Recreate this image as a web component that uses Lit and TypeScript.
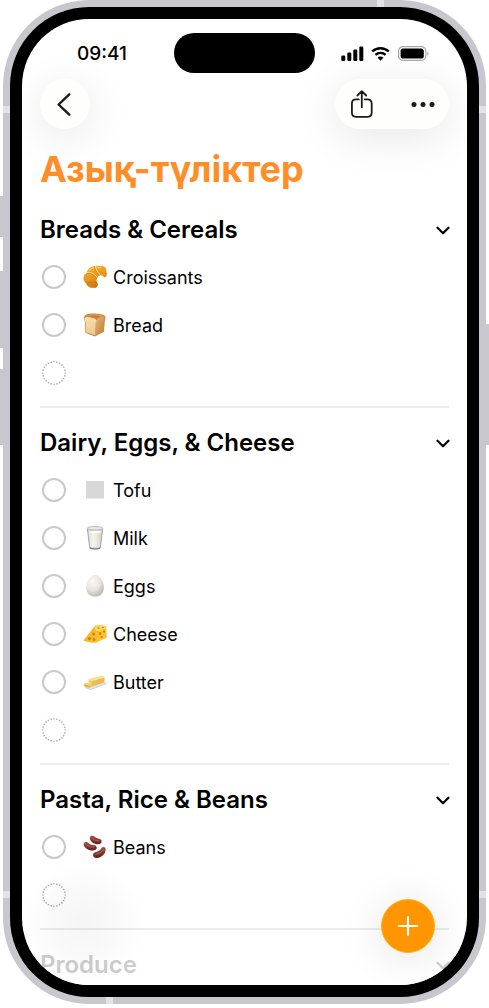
import { LitElement, html, css, svg, nothing, TemplateResult } from "lit";
import { customElement, property } from "lit/decorators.js";

type FoodName = "croissant" | "bread" | "tofu" | "milk" | "egg" | "cheese" | "butter" | "beans";

interface Item {
  name: string;
  food: FoodName;
}

interface Section {
  title: string;
  items: Item[];
}

const SECTIONS: Section[] = [
  {
    title: "Breads & Cereals",
    items: [
      { name: "Croissants", food: "croissant" },
      { name: "Bread", food: "bread" },
    ],
  },
  {
    title: "Dairy, Eggs, & Cheese",
    items: [
      { name: "Tofu", food: "tofu" },
      { name: "Milk", food: "milk" },
      { name: "Eggs", food: "egg" },
      { name: "Cheese", food: "cheese" },
      { name: "Butter", food: "butter" },
    ],
  },
  {
    title: "Pasta, Rice & Beans",
    items: [{ name: "Beans", food: "beans" }],
  },
  { title: "Produce", items: [] },
];

const FOODS: Record<FoodName, TemplateResult> = {
  croissant: svg`
    <defs>
      <linearGradient id="cr" x1="0.2" y1="0" x2="0.6" y2="1">
        <stop offset="0" stop-color="#f5b335"/><stop offset="0.55" stop-color="#e8951c"/><stop offset="1" stop-color="#c8700f"/>
      </linearGradient>
    </defs>
    <path d="M12 1C15 .4 18 1.2 20 1C22.4 1.6 23.6 4 23.4 6.2C24.2 8 24 10.4 23 11.6C22 12.8 20.6 12.4 20.2 11C18.6 9.6 16.4 10 15.2 11.6C13.8 13.4 13 15.4 14 17.6C15.2 18.6 15.4 19.6 14.6 20.6C14.4 22.2 12.6 23.4 10.4 22.8C7.6 23.2 4.4 21.6 3 18.4C.8 16.6 0 14 .8 11.4C1 9.6 2 8.6 3.6 8.2C4.2 4.4 7.4 1.2 12 1Z" fill="url(#cr)"/>
    <path d="M3.8 8.2C7.6 7.6 10.8 9.4 13.6 13.4M11.6 1.2C12 4.8 13.4 7.8 16.4 10.2M3.2 18.2C6.4 16.8 9.8 16.8 14 18" fill="none" stroke="#b8650d" stroke-width=".7" opacity=".6"/>
    <path d="M4 7.4C7.8 6.8 11.4 8.8 14.2 12.4M12.6 1.4C12.8 4.4 14.4 7.4 17 9.6" fill="none" stroke="#ffe19a" stroke-width=".9" stroke-linecap="round"/>
    <path d="M6.4 5.2C7.6 3.8 9 3 10.6 2.8M14.6 2.4C15.8 2.2 17 2.4 17.8 2.6" fill="none" stroke="#ffd268" stroke-width="1.1" stroke-linecap="round"/>`,
  bread: svg`
    <defs>
      <linearGradient id="bf" x1="0" y1="0" x2="0.3" y2="1">
        <stop offset="0" stop-color="#f8e2b6"/><stop offset="1" stop-color="#ecc98c"/>
      </linearGradient>
      <linearGradient id="bs" x1="0" y1="0" x2="1" y2="1">
        <stop offset="0" stop-color="#e6b873"/><stop offset="1" stop-color="#bd7a3a"/>
      </linearGradient>
    </defs>
    <path d="M1.2 3.8C2 1.8 6 .6 10 .6C15 .6 20.6 1.4 22.2 3.4C22.8 5.4 22.2 7 21.6 8L21 18.6L11.8 23.4L2.4 19.8L2 8.4C1 7 .6 5.2 1.2 3.8Z" fill="#c67c3a"/>
    <path d="M13.6 7C14.6 4.6 18 2.6 21 3.2C22.6 4.4 22.2 6.6 21.4 8L20.8 18.4L12 23L12.4 10Z" fill="url(#bs)"/>
    <path d="M1.6 5C2.8 3.6 6.2 4 9.4 4.8C12.4 5.4 14 6.6 13.4 8.8C12.8 9.6 12.6 10 12.6 11L12 22.6L3 19.2L2.6 8.8C1.8 7.8 1 6.2 1.6 5Z" fill="url(#bf)"/>
    <path d="M3.4 3.2C7 1.8 14 1.6 18.8 2.6" fill="none" stroke="#df9a50" stroke-width="1.2" stroke-linecap="round"/>`,
  tofu: svg`<rect x="3" y="3" width="18" height="17.500" fill="#d8d8d8"/>`,
  milk: svg`
    <defs>
      <linearGradient id="mk" x1="0" y1="0" x2="1" y2="0">
        <stop offset="0" stop-color="#e4dfd5"/><stop offset=".4" stop-color="#f8f5ee"/><stop offset="1" stop-color="#d9d3c7"/>
      </linearGradient>
    </defs>
    <path d="M4.200 2L6.600 21.800C7 23.600 17 23.600 17.400 21.800L19.800 2Z" fill="#d2d4d4"/>
    <path d="M5.200 5.800L7.200 20.400C8 21.600 16 21.600 16.800 20.400L18.800 5.800C16 7 8 7 5.200 5.800Z" fill="url(#mk)"/>
    <ellipse cx="12" cy="2.200" rx="7.800" ry="1.700" fill="#e9ebeb" stroke="#a6abad" stroke-width=".7"/>
    <ellipse cx="12" cy="6" rx="6.600" ry="1.200" fill="#fdfbf6"/>
    <path d="M4.400 3L6.700 21.600M19.600 3L17.300 21.600" stroke="#929799" stroke-width=".8"/>
    <path d="M6.700 21.600C8 23.400 16 23.400 17.300 21.600" fill="none" stroke="#75797b" stroke-width="1.100"/>`,
  egg: svg`
    <defs>
      <radialGradient id="eg" cx=".38" cy=".3" r=".75">
        <stop offset="0" stop-color="#fbf9f5"/><stop offset=".55" stop-color="#e9e5de"/><stop offset="1" stop-color="#b9b2a6"/>
      </radialGradient>
    </defs>
    <path d="M12 1C16.800 1 20.800 7.600 20.800 13.400C20.800 19 17 22.600 12 22.600C7 22.600 3.200 19 3.200 13.400C3.200 7.600 7.200 1 12 1Z" fill="url(#eg)"/>`,
  cheese: svg`
    <path d="M.4 18.400L12.200 3.800C14 2.800 20 3.200 23.200 4.600L23.600 15.600L12.800 20.400C9 20.600 4 19.800 .4 18.400Z" fill="#f2a91c"/>
    <path d="M.6 18.200L11.400 7.400L14.400 9.600L13 20.200C9 20.400 4.400 19.600 .6 18.200Z" fill="#f7bb2a"/>
    <path d="M11.400 7.200L12.400 3.800C15 3 20 3.400 23 4.600L22.800 7L14.400 9.400Z" fill="#ffdc55"/>
    <path d="M14.400 9.400L23 6.800L23.400 15.400L13 20.200Z" fill="#fbc62f"/>
    <g fill="#cf7b0c">
      <ellipse cx="6.400" cy="16.600" rx="1.700" ry="1.300"/><ellipse cx="10.600" cy="12" rx="1.300" ry="1.600"/>
      <ellipse cx="11" cy="17.600" rx="1.200" ry="1.400"/><ellipse cx="17" cy="11.400" rx="1.300" ry="1.500"/>
      <ellipse cx="21" cy="9.600" rx="1" ry="1.300"/><ellipse cx="18.600" cy="15" rx="1.200" ry="1"/>
      <ellipse cx="15.400" cy="6" rx="1.300" ry=".7"/><ellipse cx="19.800" cy="5.400" rx="1.100" ry=".6"/>
    </g>`,
  butter: svg`
    <path d="M0 14.600L17.800 9.800L24 13.200L7.400 19.400C4.800 19.800 .6 17.600 0 14.600Z" fill="#e2e5ea"/>
    <path d="M2.400 17.400L7.400 19.600L23.800 13.600" fill="none" stroke="#c4c8d0" stroke-width=".8"/>
    <path d="M.8 14.400C1.800 12.600 3.600 13.400 5.400 13.600L8.600 14.200L7.600 17.600C5 18 1.400 16.800 .8 14.400Z" fill="#e5b647"/>
    <path d="M5.800 9.200L18.800 5.800L21.600 7.400L21.400 12.600L8.600 16.800L5.800 14.400Z" fill="#e9bd55"/>
    <path d="M5.800 9.200L18.800 5.800L21.600 7.400L8.600 11.200Z" fill="#fbe394"/>
    <path d="M5.800 9.200L8.600 11.200V16.800L5.800 14.400Z" fill="#f5d173"/>
    <path d="M1.600 14.400C2.800 13.600 4.400 14.400 6.800 15.200" fill="none" stroke="#fbe08c" stroke-width="1"/>`,
  beans: svg`
    <defs>
      <linearGradient id="bn" x1="0" y1="0" x2="0" y2="1">
        <stop offset="0" stop-color="#a34a42"/><stop offset=".5" stop-color="#8a3632"/><stop offset="1" stop-color="#5f1e1d"/>
      </linearGradient>
    </defs>
    <path d="M7 2C7.600 .2 10 .4 11.400 1.600C13 3.200 14.600 3.600 16.600 4C19 4.600 19.200 7.400 17.600 8.600C15.600 10 11.800 9.200 9.200 7.200C7.200 5.600 6.400 3.600 7 2Z" fill="url(#bn)"/>
    <path d="M1 8C2.200 6.400 4.200 7 5.600 8.400C7.200 9.800 9.400 9.800 11.600 10.200C14 10.800 14.400 13.600 12.600 14.800C10.200 16.200 5.600 15.400 3 13.200C1 11.600 .2 9.400 1 8Z" fill="url(#bn)"/>
    <path d="M22 12.600C23.200 13.800 22.800 16.800 21.200 19C19.200 21.800 15.400 23.600 12.400 22.800C10 22.200 9.400 19.400 11 17.800C12.600 16.600 14.800 16.800 16.600 15.400C18 14.200 18.400 12.800 19.600 12.200C20.400 11.800 21.400 12 22 12.600Z" fill="url(#bn)"/>
    <path d="M8.600 2.600C10 4.600 12.400 5.600 15.800 6M2.600 8.800C4.400 11 7 11.800 10.600 12.200M12.600 19.400C15.800 19.200 18.800 17.200 20.600 14.400" fill="none" stroke="#d08a80" stroke-width=".9" stroke-linecap="round" opacity=".6"/>`,
};

@customElement("food-icon")
export class FoodIcon extends LitElement {
  @property() food: FoodName = "tofu";

  static styles = css`
    :host {
      display: block;
      width: 24px;
      height: 24px;
      flex: none;
    }
    .art {
      display: block;
      width: 24px;
      height: 24px;
    }
  `;

  render() {
    return html`<svg class="art" viewBox="0 0 24 24" aria-hidden="true">${FOODS[this.food]}</svg>`;
  }
}

@customElement("list-section")
export class ListSection extends LitElement {
  @property({ attribute: false }) section!: Section;

  static styles = css`
    :host {
      display: block;
      padding: 10px 0 9px;
      border-bottom: 2px solid #ececec;
    }
    :host(:last-of-type) {
      border-bottom: 0;
    }
    .title {
      margin: 0;
      font-size: 24px;
      font-weight: 600;
      line-height: 48px;
    }
    .toggle {
      display: flex;
      align-items: center;
      justify-content: space-between;
      box-sizing: border-box;
      width: 100%;
      height: 48px;
      padding: 2px 0 0;
      border: 0;
      background: none;
      color: #000;
      font: inherit;
      line-height: 46px;
      text-align: left;
      white-space: nowrap;
    }
    .chevron {
      width: 14px;
      height: 10px;
      margin-right: -1px;
      flex: none;
    }
    .items {
      list-style: none;
      margin: 0;
      padding: 0 0 0 2px;
    }
    .row {
      display: flex;
      align-items: center;
      height: 48px;
    }
    .label {
      display: flex;
      align-items: center;
      gap: 6px;
      padding-left: 17px;
      font-size: 18px;
      line-height: 24px;
    }
    .name {
      padding-top: 1px;
    }
    .check {
      appearance: none;
      width: 24px;
      height: 24px;
      margin: 0;
      border: 2px solid #c9c9c9;
      border-radius: 50%;
      flex: none;
    }
    .check:checked {
      background: #ff9500;
      border-color: #ff9500;
    }
    .add {
      display: block;
      width: 24px;
      height: 24px;
      padding: 0;
      border: 0;
      background: none;
    }
    .dots {
      display: block;
      width: 24px;
      height: 24px;
    }
  `;

  render() {
    const { title, items } = this.section;
    return html`
      <h2 class="title">
        <button class="toggle" type="button" aria-expanded=${items.length ? "true" : "false"}>
          <span>${title}</span>
          <svg class="chevron" viewBox="0 0 14 10" aria-hidden="true">
            <path d="M1.500 2.700L7 8.300L12.500 2.700" fill="none" stroke="#000" stroke-width="2.200" stroke-linecap="round" stroke-linejoin="round" />
          </svg>
        </button>
      </h2>
      ${items.length
        ? html`<ul class="items">
            ${items.map(
              (item) => html`<li class="row">
                <input class="check" type="checkbox" id=${item.food} />
                <label class="label" for=${item.food}>
                  <food-icon .food=${item.food}></food-icon>
                  <span class="name">${item.name}</span>
                </label>
              </li>`
            )}
            <li class="row">
              <button class="add" type="button" aria-label="Add item">
                <svg class="dots" viewBox="0 0 24 24" aria-hidden="true">
                  <circle cx="12" cy="12" r="11.200" pathLength="96" fill="none" stroke="#adadad" stroke-width="1.600" stroke-linecap="round" stroke-dasharray="0.010 3.990" />
                </svg>
              </button>
            </li>
          </ul>`
        : nothing}
    `;
  }
}

@customElement("app-root")
export class AppRoot extends LitElement {
  static styles = css`
    :host {
      display: block;
      box-sizing: border-box;
      height: 100vh;
      padding: 0 3px 4px;
      background: #fff;
      color: #000;
      font-family: Inter, "Noto Sans", sans-serif;
      overflow: hidden;
    }
    .device {
      position: relative;
      box-sizing: border-box;
      height: 100%;
      padding: 7px;
      border-radius: 86px;
      background: #c8c7cd;
    }
    .key,
    .band {
      position: absolute;
    }
    .key {
      width: 3px;
      background: #c8c7cd;
    }
    .action {
      left: -3px;
      top: 196px;
      height: 41px;
    }
    .volume-up {
      left: -3px;
      top: 271px;
      height: 77px;
    }
    .volume-down {
      left: -3px;
      top: 369px;
      height: 76px;
    }
    .power {
      right: -3px;
      top: 324px;
      height: 121px;
    }
    .band {
      background: #e2e1e6;
    }
    .side {
      left: 0;
      right: 0;
      height: 7px;
    }
    .upper {
      top: 106px;
    }
    .lower {
      bottom: 106px;
    }
    .edge {
      width: 7px;
      height: 7px;
    }
    .top {
      top: 0;
      right: 102px;
    }
    .bottom {
      bottom: 0;
      left: 103px;
    }
    .bezel {
      position: relative;
      box-sizing: border-box;
      height: 100%;
      padding: 12px;
      border-radius: 79px;
      background: #000;
    }
    .screen {
      position: relative;
      box-sizing: border-box;
      height: 100%;
      padding: 14px 18px 0;
      border-radius: 67px;
      background: #fff;
      overflow: hidden;
    }
    .status {
      display: grid;
      grid-template-columns: 1fr 141px 1fr;
      align-items: center;
      height: 40px;
    }
    .time {
      padding: 2px 0 0 37px;
      font-size: 19px;
      font-weight: 500;
      line-height: 24px;
    }
    .island {
      height: 40px;
      border-radius: 20px;
      background: #000;
    }
    .signals {
      display: flex;
      align-items: center;
      justify-content: flex-end;
      gap: 7px;
      padding: 2px 20px 0 0;
    }
    .glyph {
      display: block;
      flex: none;
    }
    .nav {
      display: flex;
      justify-content: space-between;
      margin-top: 6px;
    }
    .pill {
      display: flex;
      height: 50px;
      border-radius: 25px;
      background: #fefefd;
      box-shadow: 0 8px 44px rgba(0, 0, 0, 0.1);
    }
    .tool {
      display: flex;
      align-items: center;
      justify-content: center;
      height: 50px;
      padding: 0;
      border: 0;
      border-radius: 25px;
      background: none;
    }
    .back {
      width: 50px;
    }
    .share {
      width: 53px;
    }
    .more {
      width: 61px;
      padding-left: 9px;
    }
    .heading {
      position: relative;
      margin: 18px 0 4px;
      color: #ff8d28;
      font-size: 36px;
      font-weight: 700;
      line-height: 44px;
      white-space: nowrap;
    }
    .haze {
      position: absolute;
      left: 0;
      bottom: 0;
      width: 130px;
      height: 130px;
      background: radial-gradient(circle at 62px 68px, rgba(0, 0, 0, 0.04), rgba(0, 0, 0, 0.025) 30px, rgba(0, 0, 0, 0) 62px);
    }
    .fade {
      position: absolute;
      left: 0;
      right: 0;
      bottom: 0;
      height: 50px;
      background: linear-gradient(rgba(255, 255, 255, 0), rgba(255, 255, 255, 0.8) 16px);
    }
    .plus {
      position: absolute;
      right: 32px;
      bottom: 32px;
      display: flex;
      align-items: center;
      justify-content: center;
      box-sizing: border-box;
      width: 54px;
      height: 54px;
      padding: 0;
      border: 1px solid #ffb60a;
      border-radius: 50%;
      background: #ff9500;
      box-shadow: 0 4px 44px rgba(0, 0, 0, 0.12);
    }
  `;

  render() {
    return html`
      <div class="device">
        <span class="key action"></span>
        <span class="key volume-up"></span>
        <span class="key volume-down"></span>
        <span class="key power"></span>
        <span class="band side upper"></span>
        <span class="band side lower"></span>
        <span class="band edge top"></span>
        <span class="band edge bottom"></span>
        <div class="bezel">
          <main class="screen">
            <div class="status">
              <span class="time">09:41</span>
              <span class="island"></span>
              <span class="signals">
                <svg class="glyph" width="23" height="16" viewBox="0 0 23 16" aria-hidden="true">
                  <rect x="0.300" y="9.500" width="4" height="5.500" rx="1.200" />
                  <rect x="6.300" y="6.500" width="4" height="8.500" rx="1.200" />
                  <rect x="12.300" y="3.500" width="4" height="11.500" rx="1.200" />
                  <rect x="18.300" y="0.600" width="4" height="14.400" rx="1.200" />
                </svg>
                <svg class="glyph" width="20" height="16" viewBox="0 0 20 16" aria-hidden="true">
                  <path d="M1.200 5.400C5.900 1.100 13.100 1.100 17.800 5.400M4.400 8.800C7.300 6.200 11.700 6.200 14.600 8.800" fill="none" stroke="#000" stroke-width="2.400" />
                  <path d="M9.500 14.700L6.500 11.600C8.200 10.200 10.800 10.200 12.500 11.600Z" />
                </svg>
                <svg class="glyph" width="31" height="16" viewBox="0 0 31 16" aria-hidden="true">
                  <rect x="0.600" y="0.600" width="27.200" height="13.800" rx="4.400" fill="none" stroke="#a6a6a6" stroke-width="1.200" />
                  <rect x="2.600" y="2.500" width="23.200" height="10" rx="2.600" />
                  <path d="M29.300 5.300C31 6.200 31 8.800 29.300 9.700Z" fill="#a6a6a6" />
                </svg>
              </span>
            </div>
            <nav class="nav">
              <div class="pill">
                <button class="tool back" type="button" aria-label="Back">
                  <svg class="glyph" width="16" height="24" viewBox="0 0 16 24" aria-hidden="true">
                    <path d="M12.300 2.300L1.600 12.500L12.300 22.700" fill="none" stroke="#1a1a1a" stroke-width="2.400" stroke-linecap="round" stroke-linejoin="round" />
                  </svg>
                </button>
              </div>
              <div class="pill">
                <button class="tool share" type="button" aria-label="Share">
                  <svg class="glyph" width="24" height="30" viewBox="0 0 24 30" aria-hidden="true">
                    <path d="M8.800 10.400H6.200C3.200 10.400 1.900 11.700 1.900 14.700V23.500C1.900 26.500 3.200 27.800 6.200 27.800H17.400C20.400 27.800 21.700 26.500 21.700 23.500V14.700C21.700 11.700 20.400 10.400 17.400 10.400H14.800M11.800 18.200V2.300M7.400 6.500L11.800 2.100L16.200 6.500" fill="none" stroke="#1a1a1a" stroke-width="1.800" stroke-linecap="round" stroke-linejoin="round" />
                  </svg>
                </button>
                <button class="tool more" type="button" aria-label="More">
                  <svg class="glyph" width="24" height="6" viewBox="0 0 24 6" aria-hidden="true">
                    <circle cx="3" cy="3.500" r="2.500" fill="#1a1a1a" />
                    <circle cx="12" cy="3.500" r="2.500" fill="#1a1a1a" />
                    <circle cx="21" cy="3.500" r="2.500" fill="#1a1a1a" />
                  </svg>
                </button>
              </div>
            </nav>
            <h1 class="heading">Азық-түліктер</h1>
            ${SECTIONS.map((section) => html`<list-section .section=${section}></list-section>`)}
            <div class="fade"></div>
            <div class="haze"></div>
            <button class="plus" type="button" aria-label="Add">
              <svg class="glyph" width="22" height="22" viewBox="0 0 22 22" aria-hidden="true">
                <path d="M11 2V20M2 11H20" fill="none" stroke="#fff" stroke-width="2.200" stroke-linecap="round" />
              </svg>
            </button>
          </main>
        </div>
      </div>
    `;
  }
}
